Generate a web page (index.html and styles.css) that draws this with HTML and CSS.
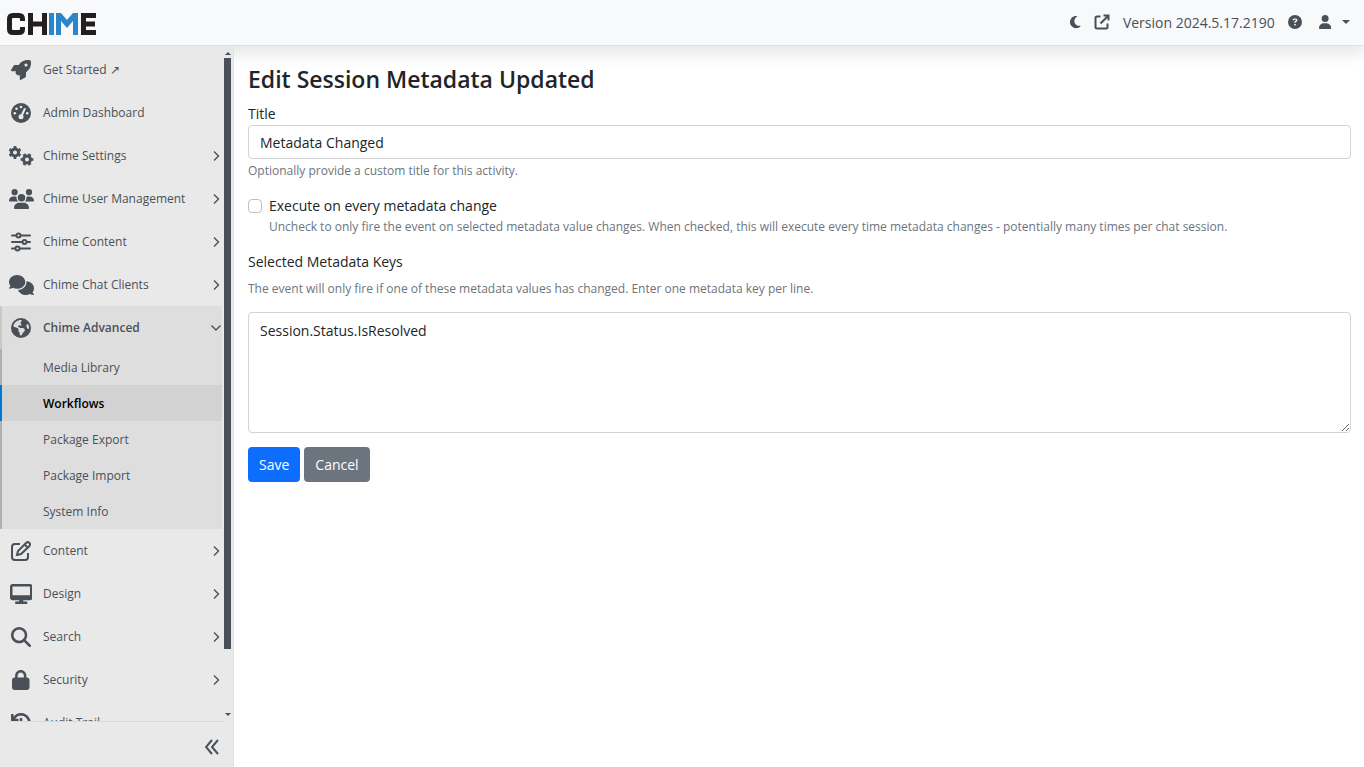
FILE: index.html
```html
<!DOCTYPE html>
<html lang="en">
<head>
  <meta charset="UTF-8">
  <meta name="viewport" content="width=device-width, initial-scale=1">
  <title>Edit Session Metadata Updated</title>
  <link rel="stylesheet" href="styles.css">
</head>
<body>

  <header class="topbar">
    <a class="logo" href="#" aria-label="Chime">
      <svg viewBox="0 0 90 22" width="90" height="22" fill="none" stroke="#231f20" stroke-width="5">
        <path d="M15.500 8V6Q15.500 2.500 12 2.500H6Q2.500 2.500 2.500 6V16Q2.500 19.500 6 19.500H12Q15.500 19.500 15.500 16V14"/>
        <path d="M23.500 0V22M37.500 0V22M24 11H37"/>
        <path stroke="#2a86c8" d="M44.500 0V22"/>
        <path fill="#2a86c8" stroke="none" d="M49 22V0H54L60 7L66 0H71V22H66V8L60 15L54 8V22Z"/>
        <path d="M89 2.500H76.500V19.500H89M76 11H88"/>
      </svg>
    </a>
    <nav class="tools">
      <button type="button" class="tool" aria-label="Theme">
        <svg class="fa" viewBox="0 0 384 512" height="14"><path d="M223.500 32C100 32 0 132.300 0 256S100 480 223.500 480c60.600 0 115.500-24.200 155.800-63.400c5-4.900 6.300-12.500 3.100-18.700s-10.100-9.700-17-8.500c-9.800 1.700-19.800 2.600-30.100 2.600c-96.900 0-175.500-78.800-175.500-176c0-65.800 36-123.100 89.300-153.300c6.100-3.500 9.200-10.500 7.700-17.300s-7.300-11.900-14.300-12.500c-6.300-.5-12.600-.8-19-.8z"/></svg>
      </button>
      <a class="tool" href="#" aria-label="Open site">
        <svg class="line" viewBox="0 0 16 16" width="16" height="16" stroke-width="2"><path d="M6.500 2.500H3Q1.500 2.500 1.500 4V13Q1.500 14.500 3 14.500H12Q13.500 14.500 13.500 13V9.500M6.500 9.500L14 2M9.500 1.500H14.500V6.500"/></svg>
      </a>
      <span class="version">Version 2024.5.17.2190</span>
      <a class="tool" href="#" aria-label="Help">
        <svg class="fa" viewBox="0 0 512 512" height="14"><path d="M256 512A256 256 0 1 0 256 0a256 256 0 1 0 0 512zM169.800 165.300c7.900-22.300 29.100-37.300 52.800-37.300h58.300c34.900 0 63.100 28.300 63.100 63.100c0 22.600-12.100 43.500-31.700 54.800L280 264.400c-.2 13-10.900 23.600-24 23.600c-13.300 0-24-10.700-24-24V250.500c0-8.600 4.600-16.500 12.100-20.800l44.300-25.400c4.700-2.700 7.600-7.700 7.600-13.100c0-8.400-6.800-15.100-15.100-15.100H222.600c-3.400 0-6.400 2.100-7.500 5.300l-.4 1.200c-4.400 12.500-18.200 19-30.600 14.600s-19-18.200-14.600-30.600l.4-1.200zM224 352a32 32 0 1 1 64 0 32 32 0 1 1 -64 0z"/></svg>
      </a>
      <button type="button" class="tool user" aria-label="Account">
        <svg class="fa" viewBox="0 0 448 512" height="14"><path d="M224 256A128 128 0 1 0 224 0a128 128 0 1 0 0 256zm-45.700 48C79.800 304 0 383.800 0 482.300C0 498.700 13.300 512 29.700 512H418.300c16.400 0 29.700-13.300 29.700-29.700C448 383.800 368.200 304 269.700 304H178.300z"/></svg>
        <span class="caret"></span>
      </button>
    </nav>
  </header>

  <div class="layout">
    <aside class="sidebar">
      <div class="menu-wrap">
        <ul class="menu">
          <li><a class="item" href="#">
            <svg class="fa icon" viewBox="0 0 512 512" height="20"><path d="M156.600 384.900L125.700 354c-8.500-8.500-11.500-20.800-7.700-32.200c3-8.900 7-20.500 11.800-33.800L24 288c-8.600 0-16.600-4.600-20.900-12.100s-4.200-16.700 .2-24.100l52.500-88.500c13-21.900 36.500-35.300 61.900-35.300l82.300 0c2.400-4 4.800-7.700 7.200-11.300C289.100-4.100 411.100-8.100 483.900 5.300c11.600 2.100 20.600 11.200 22.800 22.800c13.400 72.900 9.300 194.800-111.400 276.700c-3.500 2.400-7.300 4.800-11.300 7.200v82.300c0 25.400-13.400 49-35.300 61.900l-88.500 52.500c-7.400 4.400-16.600 4.500-24.100 .2s-12.100-12.200-12.100-20.900V380.800c-14.100 4.900-26.400 8.900-35.700 11.900c-11.200 3.600-23.400 .5-31.800-7.800zM384 168a40 40 0 1 0 0-80 40 40 0 1 0 0 80z"/></svg>
            <span>Get Started <small>↗</small></span></a></li>
          <li><a class="item" href="#">
            <svg class="icon" viewBox="0 0 20 20" width="20" height="20"><circle cx="10" cy="10" r="10" fill="#495057"/><g fill="#e9e9e9"><circle cx="10" cy="4" r="1.300"/><circle cx="5.500" cy="5.800" r="1.300"/><circle cx="3.800" cy="10.300" r="1.300"/><circle cx="16.200" cy="10.300" r="1.300"/><circle cx="10" cy="13.800" r="2.500"/></g><path d="M10.500 13L13.700 6" stroke="#e9e9e9" stroke-width="2" stroke-linecap="round"/></svg>
            <span>Admin Dashboard</span></a></li>
          <li><a class="item" href="#">
            <svg class="line icon" viewBox="0 0 26 20" width="26" height="20">
              <circle cx="7" cy="6.500" r="3.500" stroke-width="3"/><circle cx="7" cy="6.500" r="5.300" stroke-width="2.200" pathLength="12" stroke-dasharray="1 1" stroke-dashoffset="1.500"/>
              <circle cx="19" cy="13.500" r="3.500" stroke-width="3"/><circle cx="19" cy="13.500" r="5.300" stroke-width="2.200" pathLength="12" stroke-dasharray="1 1" stroke-dashoffset=".5"/>
            </svg>
            <span>Chime Settings</span><svg class="line arrow" viewBox="0 0 8 12" width="8" height="12"><path d="M2 1.500L6.500 6L2 10.500"/></svg></a></li>
          <li><a class="item" href="#">
            <svg class="fa icon" viewBox="0 0 640 512" height="20"><path d="M144 0a80 80 0 1 1 0 160A80 80 0 1 1 144 0zM512 0a80 80 0 1 1 0 160A80 80 0 1 1 512 0zM0 298.700C0 239.800 47.800 192 106.700 192h42.700c15.900 0 31 3.500 44.600 9.700c-1.300 7.200-1.900 14.700-1.900 22.300c0 38.200 16.800 72.500 43.300 96c-.2 0-.4 0-.7 0H21.300C9.600 320 0 310.400 0 298.700zM405.300 320c-.2 0-.4 0-.7 0c26.600-23.500 43.300-57.800 43.300-96c0-7.600-.7-15-1.900-22.300c13.600-6.300 28.700-9.700 44.600-9.700h42.700C592.200 192 640 239.800 640 298.700c0 11.800-9.600 21.300-21.300 21.300H405.300zM224 224a96 96 0 1 1 192 0 96 96 0 1 1 -192 0zM128 485.300C128 411.700 187.700 352 261.300 352H378.700C452.300 352 512 411.700 512 485.300c0 14.700-11.900 26.700-26.700 26.700H154.700c-14.700 0-26.700-11.900-26.700-26.700z"/></svg>
            <span>Chime User Management</span><svg class="line arrow" viewBox="0 0 8 12" width="8" height="12"><path d="M2 1.500L6.500 6L2 10.500"/></svg></a></li>
          <li><a class="item" href="#">
            <svg class="line icon" viewBox="0 0 20 20" width="20" height="20" stroke-width="2" stroke-linecap="round"><path d="M1 3.500H5M10 3.500H19M1 10H11M16 10H19M1 16.500H4M9 16.500H19"/><circle cx="7.500" cy="3.500" r="2"/><circle cx="13.500" cy="10" r="2"/><circle cx="6.500" cy="16.500" r="2"/></svg>
            <span>Chime Content</span><svg class="line arrow" viewBox="0 0 8 12" width="8" height="12"><path d="M2 1.500L6.500 6L2 10.500"/></svg></a></li>
          <li><a class="item" href="#">
            <svg class="fa icon" viewBox="0 0 640 512" height="20"><path d="M208 352c114.900 0 208-78.800 208-176S322.900 0 208 0S0 78.800 0 176c0 38.600 14.700 74.300 39.600 103.400c-3.500 9.400-8.700 17.700-14.200 24.700c-4.800 6.200-9.700 11-13.300 14.300c-1.800 1.600-3.300 2.900-4.300 3.700c-.5 .4-.9 .7-1.100 .8l-.2 .2C1 327.200-1.400 334.400 .8 340.900S9.100 352 16 352c21.800 0 43.800-5.600 62.100-12.500c9.200-3.500 17.800-7.400 25.200-11.400C134.100 343.300 169.800 352 208 352zM448 176c0 112.300-99.100 196.900-216.500 207C255.800 457.400 336.400 512 432 512c38.200 0 73.900-8.700 104.700-23.900c7.500 4 16 7.900 25.200 11.400c18.300 6.900 40.300 12.500 62.100 12.500c6.900 0 13.100-4.500 15.200-11.100c2.100-6.600-.2-13.800-5.800-17.900c-8-6-25-22-33-43.600c24.900-29 39.600-64.700 39.600-103.400c0-92.800-84.900-168.900-192.600-175.500c.4 5.100 .6 10.300 .6 15.500z"/></svg>
            <span>Chime Chat Clients</span><svg class="line arrow" viewBox="0 0 8 12" width="8" height="12"><path d="M2 1.500L6.500 6L2 10.500"/></svg></a></li>
          <li class="open"><a class="item" href="#">
            <svg class="fa icon" viewBox="0 0 512 512" height="20"><path fill-rule="evenodd" d="M57.700 193l9.400 16.400c8.300 14.500 21.900 25.200 38 29.800L163 255.700c17.200 4.900 29 20.600 29 38.500v39.900c0 11 6.200 21 16 25.900s16 14.900 16 25.900v39c0 15.600 14.900 26.900 29.900 22.600c16.100-4.600 28.600-17.500 32.700-33.800l2.800-11.200c4.200-16.900 15.200-31.400 30.300-40l8.100-4.600c15-8.500 24.200-24.500 24.200-41.700v-8.300c0-12.700-5.100-24.900-14.100-33.900l-3.900-3.900c-9-9-21.200-14.100-33.900-14.100H257c-11.100 0-22.100-2.900-31.800-8.400l-34.500-19.700c-4.300-2.500-7.600-6.500-9.200-11.200c-3.200-9.600 1.100-20 10.200-24.500l5.900-3c6.600-3.300 14.300-3.900 21.300-1.500l23.200 7.700c8.200 2.700 17.200-.4 21.900-7.500c4.700-7 4.200-16.300-1.200-22.800l-13.600-16.300c-10-12-9.900-29.500 .3-41.300l15.700-18.300c8.800-10.300 10.200-25 3.500-36.700l-2.400-4.200c-3.500-.2-6.900-.3-10.400-.3C163.100 48 84.400 108.900 57.700 193zM464 256c0-36.800-9.600-71.400-26.400-101.500L412 164.800c-15.700 6.300-23.800 23.800-18.500 39.800l16.900 50.700c3.500 10.400 12 18.300 22.600 20.900l29.100 7.300c1.200-9 1.800-18.200 1.800-27.500zM0 256a256 256 0 1 1 512 0A256 256 0 1 1 0 256z"/></svg>
            <span>Chime Advanced</span><svg class="line arrow" viewBox="0 0 12 8" width="12" height="8"><path d="M1.500 1.500L6 6L10.500 1.500"/></svg></a>
            <ul class="submenu">
              <li><a href="#">Media Library</a></li>
              <li><a class="active" href="#">Workflows</a></li>
              <li><a href="#">Package Export</a></li>
              <li><a href="#">Package Import</a></li>
              <li><a href="#">System Info</a></li>
            </ul></li>
          <li><a class="item" href="#">
            <svg class="line icon" viewBox="0 0 20 20" width="20" height="20" stroke-width="2"><path d="M9 3H4Q1 3 1 6V16Q1 19 4 19H14Q17 19 17 16V12M6 14L7 10L15.500 1.500Q17 .5 18.500 2Q19.500 3.500 18.500 5L10 13ZM13.500 3.500L16.500 6.500"/></svg>
            <span>Content</span><svg class="line arrow" viewBox="0 0 8 12" width="8" height="12"><path d="M2 1.500L6.500 6L2 10.500"/></svg></a></li>
          <li><a class="item" href="#">
            <svg class="fa icon" viewBox="0 0 576 512" height="20"><path d="M64 0C28.700 0 0 28.700 0 64V352c0 35.300 28.700 64 64 64H240l-10.700 32H160c-17.700 0-32 14.300-32 32s14.300 32 32 32H416c17.700 0 32-14.300 32-32s-14.300-32-32-32H346.700L336 416H512c35.300 0 64-28.700 64-64V64c0-35.300-28.700-64-64-64H64zM512 64V288H64V64H512z"/></svg>
            <span>Design</span><svg class="line arrow" viewBox="0 0 8 12" width="8" height="12"><path d="M2 1.500L6.500 6L2 10.500"/></svg></a></li>
          <li><a class="item" href="#">
            <svg class="fa icon" viewBox="0 0 512 512" height="20"><path d="M416 208c0 45.900-14.900 88.300-40 122.700L502.600 457.400c12.500 12.500 12.500 32.800 0 45.300s-32.800 12.500-45.300 0L330.700 376c-34.400 25.200-76.800 40-122.700 40C93.100 416 0 322.900 0 208S93.100 0 208 0S416 93.100 416 208zM208 352a144 144 0 1 0 0-288 144 144 0 1 0 0 288z"/></svg>
            <span>Search</span><svg class="line arrow" viewBox="0 0 8 12" width="8" height="12"><path d="M2 1.500L6.500 6L2 10.500"/></svg></a></li>
          <li><a class="item" href="#">
            <svg class="fa icon" viewBox="0 0 448 512" height="20"><path d="M144 144v48H304V144c0-44.200-35.800-80-80-80s-80 35.800-80 80zM80 192V144C80 64.500 144.500 0 224 0s144 64.500 144 144v48h16c35.300 0 64 28.700 64 64V448c0 35.300-28.700 64-64 64H64c-35.300 0-64-28.700-64-64V256c0-35.300 28.700-64 64-64H80z"/></svg>
            <span>Security</span><svg class="line arrow" viewBox="0 0 8 12" width="8" height="12"><path d="M2 1.500L6.500 6L2 10.500"/></svg></a></li>
          <li><a class="item" href="#">
            <svg class="line icon" viewBox="0 0 20 20" width="20" height="20" stroke-width="2.500"><path d="M2.500 6Q5.500 1.300 10 1.300A8.700 8.700 0 1 1 4 16.500M1.300 1V7H7.500M10 5V10L13 13"/></svg>
            <span>Audit Trail</span></a></li>
        </ul>
        <div class="scroller" aria-hidden="true">
          <span class="scroll-up"></span>
          <span class="thumb"></span>
          <span class="scroll-down"></span>
        </div>
      </div>
      <div class="collapse">
        <button type="button" aria-label="Collapse menu">
          <svg class="line" viewBox="0 0 14 16" width="14" height="16" stroke-width="2"><path d="M7 1L1 8L7 15M13 1L7 8L13 15"/></svg>
        </button>
      </div>
    </aside>

    <main class="content">
      <h1>Edit Session Metadata Updated</h1>
      <form>
        <div class="group">
          <label for="title">Title</label>
          <input class="control" type="text" id="title" value="Metadata Changed">
          <p class="hint">Optionally provide a custom title for this activity.</p>
        </div>
        <div class="group check">
          <input type="checkbox" id="every">
          <div>
            <label for="every">Execute on every metadata change</label>
            <p class="hint">Uncheck to only fire the event on selected metadata value changes. When checked, this will execute every time metadata changes - potentially many times per chat session.</p>
          </div>
        </div>
        <div class="group keys">
          <label for="keys">Selected Metadata Keys</label>
          <p class="hint">The event will only fire if one of these metadata values has changed. Enter one metadata key per line.</p>
          <textarea class="control" id="keys">Session.Status.IsResolved</textarea>
        </div>
        <div class="buttons">
          <button type="submit" class="btn primary">Save</button>
          <a class="btn secondary" href="#">Cancel</a>
        </div>
      </form>
    </main>
  </div>

</body>
</html>
```
FILE: styles.css
```css
:root {
  --icon: #495057;
  --side: #e9e9e9;
  --border: #ced4da;
  --text: #212529;
  --muted: #6c757d;
}

* {
  box-sizing: border-box;
}

body {
  margin: 0;
  height: 100vh;
  display: flex;
  flex-direction: column;
  font-family: "Open Sans", "Noto Sans", sans-serif;
  font-size: 14px;
  line-height: 21px;
  color: var(--text);
  background: #fff;
}

a {
  color: inherit;
  text-decoration: none;
}

button {
  font: inherit;
  color: inherit;
  border: 0;
  padding: 0;
  background: none;
  cursor: pointer;
}

ul {
  list-style: none;
  margin: 0;
  padding: 0;
}

svg {
  display: block;
}

.fa {
  fill: var(--icon);
}

.line {
  fill: none;
  stroke: var(--icon);
}

/* top bar */
.topbar {
  position: relative;
  z-index: 1;
  flex: none;
  height: 46px;
  display: flex;
  align-items: center;
  justify-content: space-between;
  padding: 2px 14px 0 7px;
  background: #f8f9fa;
  border-bottom: 1px solid #dee2e6;
  box-shadow: 0 8px 16px rgba(0, 0, 0, 0.1);
}

.tools {
  display: flex;
  align-items: center;
  gap: 13px;
  padding-bottom: 3px;
}

.version {
  color: var(--icon);
}

.user {
  display: flex;
  align-items: center;
  gap: 11px;
  margin-left: 4px;
}

.caret {
  border: 4px solid transparent;
  border-top-color: var(--icon);
  border-bottom: 0;
}

/* sidebar */
.layout {
  flex: 1;
  min-height: 0;
  display: flex;
}

.sidebar {
  position: relative;
  z-index: 2;
  flex: none;
  width: 234px;
  display: flex;
  flex-direction: column;
  background: var(--side);
  border-right: 1px solid #dee2e6;
  font-size: 12px;
  color: var(--icon);
}

.menu-wrap {
  flex: 1;
  min-height: 0;
  display: flex;
}

.menu {
  flex: 1;
  overflow: hidden;
  padding-top: 2px;
}

.item {
  display: grid;
  grid-template-columns: 26px 1fr auto;
  gap: 9px;
  align-items: center;
  height: 43px;
  padding: 0 2px 0 8px;
}

.icon {
  justify-self: center;
}

.item small {
  font-size: 12px;
}

.arrow {
  stroke-width: 1.4;
}

.open {
  background: #dedede;
}

.open .item {
  font-weight: 600;
  border-left: 2px solid #c8c8c8;
  padding: 0 0 0 6px;
}

.submenu a {
  display: block;
  padding: 8px 0 7px 41px;
  border-left: 2px solid #b0b0b0;
}

.submenu .active {
  color: #000;
  font-weight: 600;
  background: #d2d2d2;
  border-left-color: #0078d4;
}

.scroller {
  flex: none;
  width: 11px;
  display: flex;
  flex-direction: column;
  align-items: center;
  padding: 6px 2px 5px;
}

.scroll-up,
.scroll-down {
  border: 3px solid transparent;
}

.scroll-up {
  border-top: 0;
  border-bottom-color: var(--icon);
}

.scroll-down {
  border-bottom: 0;
  border-top-color: var(--icon);
  margin-top: auto;
}

.thumb {
  width: 7px;
  height: 89%;
  margin-top: 3px;
  background: var(--icon);
}

.collapse {
  flex: none;
  height: 46px;
  display: flex;
  align-items: center;
  justify-content: flex-end;
  margin: 0 9px;
  padding: 4px 5px 0 0;
  border-top: 1px solid #dadada;
}

/* edit form */
.content {
  flex: 1;
  min-width: 0;
  padding: 18px 13px 14px 14px;
}

h1 {
  margin: 0 0 9px;
  font-size: 23px;
  line-height: 30px;
  font-weight: 600;
}

.group {
  margin-bottom: 14px;
}

label {
  display: block;
}

.hint {
  margin: 1px 0 0;
  font-size: 12px;
  color: var(--muted);
}

.control {
  display: block;
  width: 100%;
  margin-top: 1px;
  padding: 5px 11px;
  border: 1px solid var(--border);
  border-radius: 4px;
  background: #fff;
  font: inherit;
  color: inherit;
}

input.control {
  height: 34px;
}

.check {
  display: flex;
  gap: 7px;
}

.check input {
  appearance: none;
  flex: none;
  width: 14px;
  height: 14px;
  margin: 4px 0 0;
  border: 1px solid #bfbfbf;
  border-radius: 4px;
  background: #fff;
}

.check input:checked {
  background: #0d6efd;
}

.check .hint {
  margin-top: 0;
}

.keys .hint {
  margin: 6px 0 13px;
}

textarea.control {
  min-height: 121px;
  padding-top: 7px;
  resize: vertical;
}

.buttons {
  display: flex;
  gap: 4px;
}

.btn {
  padding: 7px 11px;
  border-radius: 4px;
  color: #fff;
}

.primary {
  background: #0d6efd;
}

.secondary {
  background: #6c757d;
}
```
